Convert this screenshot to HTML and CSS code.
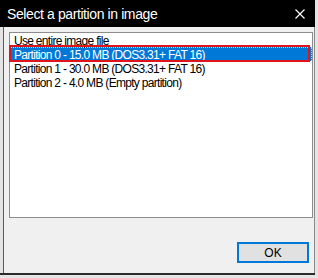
FILE: index.html
```html
<!DOCTYPE html>
<html lang="en">

<head>
    <meta charset="UTF-8">
    <title>Select a partition in image</title>
    <link rel="stylesheet" href="styles.css">
</head>

<body>
    <div class="window">
        <div class="titlebar">
            <span class="title">Select a partition in image</span>
            <svg class="close" width="10" height="10" viewBox="0 0 10 10">
                <path d="M0.5 0.5 L9.5 9.5 M9.5 0.5 L0.5 9.5" stroke="#fff" stroke-width="1.2" fill="none" />
            </svg>
        </div>

        <div class="client">
            <!-- partition list -->
            <div class="listbox">
                <div class="item">Use entire image file</div>
                <div class="item selected">Partition 0 - 15.0 MB (DOS3.31+ FAT 16)</div>
                <div class="item">Partition 1 - 30.0 MB (DOS3.31+ FAT 16)</div>
                <div class="item">Partition 2 - 4.0 MB (Empty partition)</div>
                <div class="mark"></div>
            </div>

            <div class="actions">
                <button class="ok">OK</button>
            </div>
        </div>
    </div>
</body>

</html>
```

FILE: styles.css
```css
body {
    margin: 0;
    background-color: #e4e4e4;
    font-family: "Liberation Sans", Arial, sans-serif;
}

.window {
    width: 315px;
    height: 275px;
    display: flex;
    flex-direction: column;
    border-bottom: 2px solid #2b2b2b;
    box-sizing: border-box;
}

.titlebar {
    height: 27px;
    flex-shrink: 0;
    display: flex;
    align-items: center;
    justify-content: space-between;
    padding: 0 10px 0 7px;
    background-color: #000;
    color: #fff;
}

.title {
    font-size: 14px;
    letter-spacing: -0.4px;
}

.client {
    flex: 1;
    margin-left: 3px;
    padding: 5px 0 0 5px;
    border-left: 1px solid #5a5a5a;
    border-right: 1px solid #8a8a8a;
    background-color: #f0f0f0;
}

.listbox {
    position: relative;
    width: 304px;
    height: 186px;
    box-sizing: border-box;
    border: 1px solid #8c8c8c;
    background-color: #fff;
}

.item {
    height: 14px;
    box-sizing: border-box;
    padding: 2px 0 0 4px;
    font-size: 12px;
    line-height: 12px;
    letter-spacing: -0.7px;
    color: #000;
    white-space: nowrap;
}

.item.selected {
    background-color: #0078d7;
    color: #fff;
    outline: 1px dotted #cfe3f6;
    outline-offset: -1px;
}

/* red annotation box around the selected row */
.mark {
    position: absolute;
    left: -1px;
    top: 12px;
    width: 301px;
    height: 17px;
    box-sizing: border-box;
    border: 2px solid #e0141c;
}

.actions {
    display: flex;
    justify-content: flex-end;
    margin-top: 24px;
    padding-right: 5px;
}

.ok {
    width: 72px;
    height: 21px;
    padding: 0;
    border: 2px solid #0078d7;
    background-color: #e1e1e1;
    font-family: inherit;
    font-size: 12px;
    color: #000;
}
```
